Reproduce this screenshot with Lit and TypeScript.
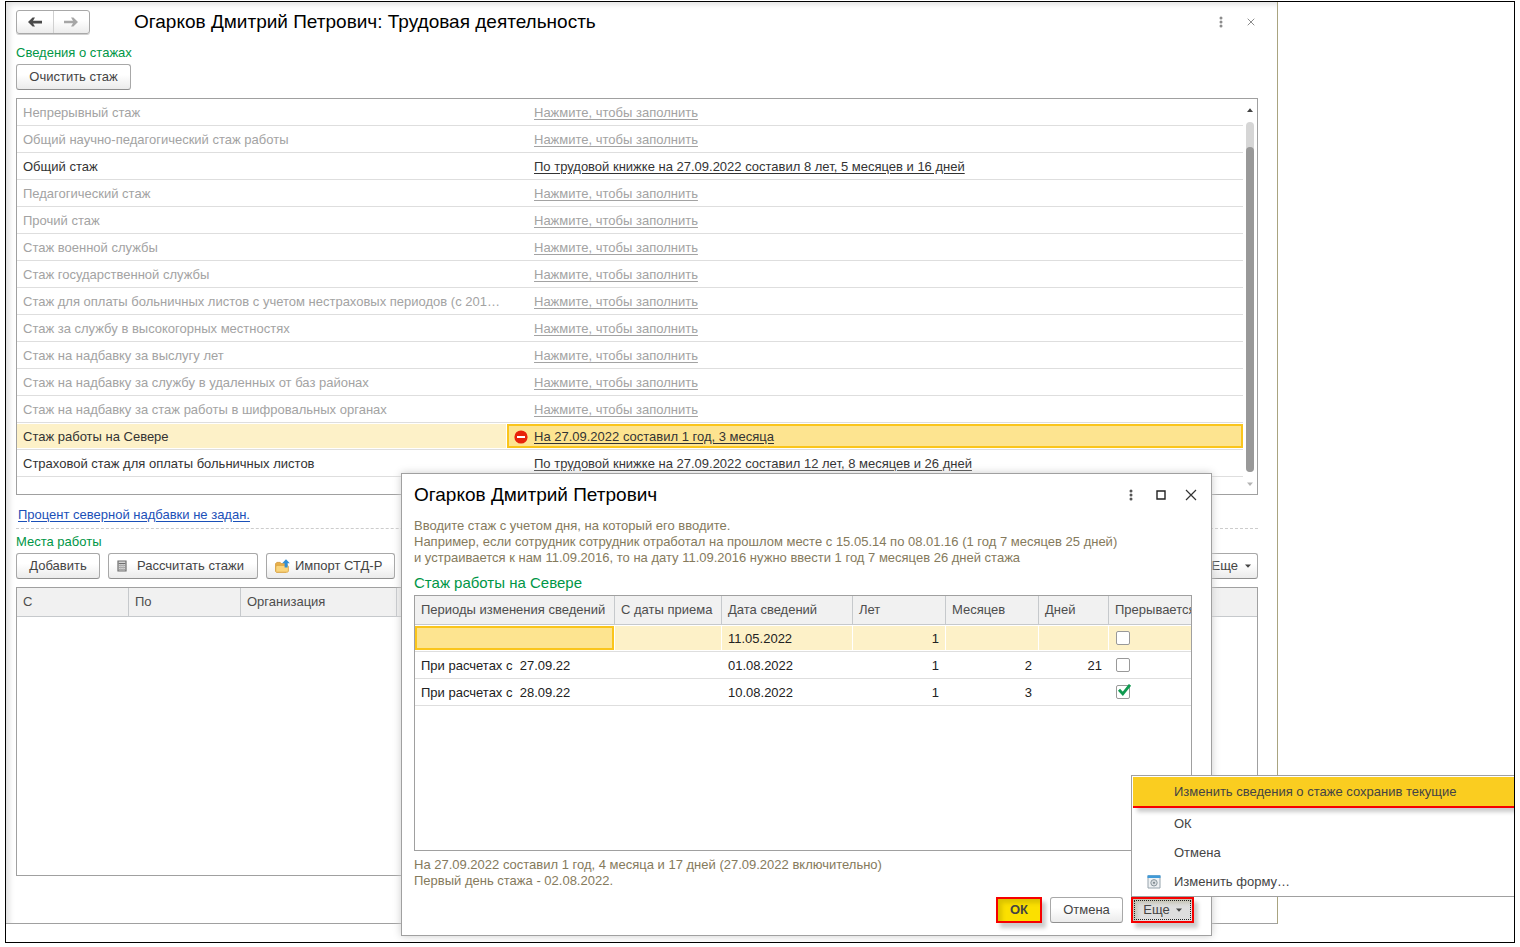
import { LitElement, html, css, svg, nothing } from "lit";
import { customElement, state } from "lit/decorators.js";
import { classMap } from "lit/directives/class-map.js";

interface Experience {
  name: string;
  value?: string;
  selected?: boolean;
}

interface Period {
  period: string;
  hired: string;
  date: string;
  years: string;
  months: string;
  days: string;
  interrupted: boolean;
}

const EXPERIENCES: Experience[] = [
  { name: "Непрерывный стаж" },
  { name: "Общий научно-педагогический стаж работы" },
  { name: "Общий стаж", value: "По трудовой книжке на 27.09.2022 составил 8 лет, 5 месяцев и 16 дней" },
  { name: "Педагогический стаж" },
  { name: "Прочий стаж" },
  { name: "Стаж военной службы" },
  { name: "Стаж государственной службы" },
  { name: "Стаж для оплаты больничных листов с учетом нестраховых периодов (с 201…" },
  { name: "Стаж за службу в высокогорных местностях" },
  { name: "Стаж на надбавку за выслугу лет" },
  { name: "Стаж на надбавку за службу в удаленных от баз районах" },
  { name: "Стаж на надбавку за стаж работы в шифровальных органах" },
  { name: "Стаж работы на Севере", value: "На 27.09.2022 составил 1 год, 3 месяца", selected: true },
  { name: "Страховой стаж для оплаты больничных листов", value: "По трудовой книжке на 27.09.2022 составил 12 лет, 8 месяцев и 26 дней" },
];

const PERIODS: Period[] = [
  { period: "", hired: "", date: "11.05.2022", years: "1", months: "", days: "", interrupted: false },
  { period: "При расчетах с  27.09.22", hired: "", date: "01.08.2022", years: "1", months: "2", days: "21", interrupted: false },
  { period: "При расчетах с  28.09.22", hired: "", date: "10.08.2022", years: "1", months: "3", days: "", interrupted: true },
];

const icon = (w: number, h: number, body: unknown) =>
  html`<svg class="icon" width=${w} height=${h} viewBox="0 0 ${w} ${h}" aria-hidden="true">${body}</svg>`;

const arrowLeft = icon(14, 10, svg`<path d="M0 5 4.6 .4H7L5 3.8H14V6.4H5L7 9.6H4.6Z" fill="#4a4a4a"/>`);
const arrowRight = icon(14, 10, svg`<path d="M14 5 9.4 .4H7L9 3.8H0V6.2H9L7 9.6H9.4Z" fill="#a6a6a6"/>`);
const dots = icon(4, 12, svg`<g fill="currentColor"><circle cx="2" cy="2" r="1.5"/><circle cx="2" cy="6" r="1.5"/><circle cx="2" cy="10" r="1.5"/></g>`);
const closeSmall = icon(8, 8, svg`<path d="M.7 .7 7.3 7.3M7.3 .7 .7 7.3" stroke="#8c8c8c" fill="none"/>`);
const closeBig = icon(12, 12, svg`<path d="M1 1 11 11M11 1 1 11" stroke="#333" stroke-width="1.2" fill="none"/>`);
const maximize = icon(10, 10, svg`<path d="M1 1H9V9H1Z" stroke="#222" stroke-width="1.4" fill="none"/>`);
const caret = icon(6, 4, svg`<path d="M0 .5H6L3 3.7Z" fill="#444"/>`);
const minus = icon(14, 14, svg`<circle cx="7" cy="7" r="6.6" fill="#e8230a"/><path d="M3 6h8v2H3z" fill="#fff"/>`);
const calc = icon(10, 12, svg`
  <path d="M1 1H9V11H1Z" fill="#d4d4d4" stroke="#6e6e6e" stroke-width="1.2"/>
  <path d="M1.6 3.5H8.4" stroke="#6e6e6e"/>
  <path d="M2 5.5H8M2 7.5H8M2 9.5H8" stroke="#9a9a9a" stroke-width=".8"/>
  <path d="M3.8 4V10.4M6.2 4V10.4" stroke="#b4b4b4" stroke-width=".7"/>`);
const folder = icon(15, 14, svg`
  <path d="M.6 12V4.6L1.8 3.4H5.2L6.4 4.6H12V12L11 13.2H1.6Z" fill="#e9b04a" stroke="#cf9434" stroke-width=".8"/>
  <path d="M.8 12.6V7.4L2 6.4H12.6L13.4 7.2V12.2L12.6 13.2H1.2Z" fill="#fad57c" stroke="#d9a344" stroke-width=".8"/>
  <path d="M11 .2 14.8 4.2H12.6V8.4H9.6V4.2H7.2Z" fill="#2f8fd6"/>`);
const formIcon = icon(14, 14, svg`
  <path d="M1 .8H13V13H1Z" fill="#eef1f3" stroke="#96a3ac"/>
  <path d="M.5 .3H13.5V3H.5Z" fill="#3f9ad8"/>
  <circle cx="7" cy="7.8" r="3.2" fill="#d8dde0" stroke="#8b979e"/>
  <circle cx="7" cy="7.8" r="1.1" fill="#7d888f"/>`);
const check = html`<svg class="check" width="16" height="16" viewBox="0 0 16 16" aria-hidden="true">
  <path d="M3 5.8 6.8 9.8 14 .8" fill="none" stroke="#109a50" stroke-width="2.8"/></svg>`;

@customElement("app-root")
export class AppRoot extends LitElement {
  @state() private periods = PERIODS;

  static styles = css`
    :host {
      display: block;
      box-sizing: border-box;
      height: 100vh;
      padding: 1px 5px 4px;
      background: #fff;
      color: #333;
      font: 13px/16px "Liberation Sans", Arial, sans-serif;
    }
    *, *::before, *::after { box-sizing: border-box; }
    .frame {
      position: relative;
      display: grid;
      grid-template-columns: minmax(0, 1fr) 236px;
      height: 100%;
      padding-bottom: 18px;
      border: 1px solid #000;
      overflow: hidden;
    }
    .icon { display: block; flex: none; }
    h1, h2, h3, p { margin: 0; font-weight: normal; }
    button { font: inherit; color: inherit; }

    .window {
      display: flex;
      flex-direction: column;
      min-height: 0;
      padding: 8px 19px 47px 10px;
      border-right: 1px solid #a9a480;
      border-bottom: 1px solid #a0a0a0;
      box-shadow: inset 7px 6px 6px -4px #dedede;
    }
    .bar { display: flex; align-items: center; height: 24px; }
    .nav { display: flex; width: 74px; height: 24px; border: 1px solid #a8a8a8; border-radius: 3px;
      background: linear-gradient(#fff 40%, #ececec); box-shadow: 0 1px 0 #d0d0d0; }
    .nav button { flex: 1; display: grid; place-items: center; padding: 0; border: 0; background: none; }
    .nav button + button { border-left: 1px solid #d0d0d0; }
    .title { flex: 1; color: #000; font-size: 19px; line-height: 24px; }
    .bar .title { margin-left: 44px; }
    .tools { display: flex; align-items: center; color: #8c8c8c; }
    .plain { display: grid; place-items: center; width: 30px; height: 24px; padding: 0; border: 0; background: none; }
    .bar .tools { margin-right: -8px; }
    .section { color: #009646; font-size: 13px; line-height: 16px; }
    .window .section { margin-top: 11px; }
    .btn {
      display: inline-flex;
      align-items: center;
      justify-content: center;
      height: 26px;
      padding: 0 12px;
      border: 1px solid #a8a8a8;
      border-bottom-color: #8f8f8f;
      border-radius: 3px;
      background: linear-gradient(#fff 40%, #ebebeb);
      color: #444;
      white-space: nowrap;
    }
    .row { display: flex; gap: 8px; margin-top: 3px; }
    .row .end { justify-content: flex-end; margin-left: auto; gap: 7px; padding: 0 6px; width: 64px; }
    .w-clear { width: 115px; }
    .w-add { width: 84px; }
    .row .w-calc, .row .w-import { justify-content: flex-start; padding: 0 8px; }
    .w-calc { width: 150px; gap: 10px; }
    .w-import { width: 129px; gap: 5px; }

    table { width: 100%; border-collapse: separate; border-spacing: 0; table-layout: fixed; }
    th, td { padding: 0; text-align: left; font-weight: normal; white-space: pre; }
    td { height: 27px; border-bottom: 1px solid #dedede; }
    .panel { border: 1px solid #a0a0a0; overflow: hidden; }

    .exp { display: flex; flex: none; height: 397px; margin-top: 8px; }
    .exp table { flex: 1; align-self: flex-start; }
    .exp .c-name { width: 490px; }
    .cell { display: flex; align-items: center; height: 24px; margin: 1px 0; padding-top: 2px; padding-left: 6px; }
    .empty, .empty a { color: #a3a3a3; }
    .cell a { color: inherit; text-underline-offset: 2px; }
    .val .cell { padding-left: 27px; }
    .sel .cell { background: #fdf1c8; }
    .exp .sel .cell { margin-right: 1px; }
    .exp .sel .val .cell, .current .cell { margin-right: 0; border: 2px solid #fac51c; background: #fde490; }
    .exp .sel .val .cell { padding-left: 5px; gap: 6px; }
    .scroll { display: flex; flex-direction: column; align-items: center; flex: none; width: 14px; padding: 9px 0 8px; }
    .track { flex: 1; display: flex; align-items: flex-end; width: 8px; margin: 10px 0; border-radius: 4px; background: #d6d6d6; }
    .thumb { width: 8px; height: 325px; border-radius: 4px; background: #999; }

    .link { align-self: flex-start; margin: 12px 0 5px 2px; color: #1b50b8; text-underline-offset: 2px; }
    .rule { border-top: 1px dashed #ccc; }
    .window .places-title { margin-top: 5px; }

    .head th { height: 29px; padding-left: 6px; border-right: 1px solid #c6c9cc; border-bottom: 1px solid #c6c9cc;
      background: #f1f1f1; color: #4d4d4d; overflow: hidden; }
    .head th:last-child { border-right: 0; }
    .places { flex: 1; min-height: 0; margin-top: 8px; }
    .places .w1 { width: 112px; }
    .places .w3 { width: 156px; }

    .dialog {
      position: absolute;
      left: 395px;
      top: 471px;
      display: flex;
      flex-direction: column;
      width: 811px;
      height: 463px;
      padding: 8px 19px 12px 12px;
      border: 1px solid #a0a0a0;
      background: #fff;
      box-shadow: 0 0 8px #ccc;
    }
    .dialog .bar { height: 26px; }
    .dialog .bar .title { margin-left: 0; }
    .dialog .bar .tools { margin-right: -14px; color: #555; }
    .hint { color: #857a5c; }
    .dialog .lead { margin-top: 10px; }
    .dialog h3 { margin-top: 7px; font-size: 15px; line-height: 20px; }
    .periods { height: 257px; margin: 2px 0 6px; }
    .periods .num .cell { justify-content: flex-end; padding-right: 6px; }
    .periods td .cell { color: #222; margin-right: 1px; }
    .periods td:last-child .cell { margin-right: 0; padding-top: 0; }
    .p1 { width: 200px; } .p2 { width: 107px; } .p3 { width: 131px; } .p4 { width: 93px; } .p6 { width: 70px; }
    .tick { display: grid; width: 16px; height: 16px; }
    .tick input { grid-area: 1 / 1; appearance: none; width: 14px; height: 14px; margin: 1px; border: 1px solid #999; border-radius: 2px; background: #fff; }
    .check { grid-area: 1 / 1; z-index: 1; pointer-events: none; margin-left: 1px; }

    .actions { display: flex; justify-content: flex-end; gap: 8px; margin: 8px -2px 0 0; }
    .mark { border: 2px solid #f60000; border-radius: 0; box-shadow: 4px 5px 4px #ccc, inset 4px 4px 4px rgba(90, 80, 0, .2); }
    .ok { width: 46px; background: #fbe000; font-weight: bold; }
    .cancel { width: 73px; }
    .more { position: relative; }
    .more-btn { position: relative; z-index: 1; width: 63px; padding: 0; gap: 6px; background: #dedede; outline: 1px dotted #222; outline-offset: -4px; }
    .menu {
      position: absolute;
      left: 0;
      bottom: 100%;
      width: 400px;
      margin: 0;
      padding: 1px 0 0 1px;
      list-style: none;
      border: 1px solid #a0a0a0;
      background: #fff;
    }
    .menu button { display: grid; grid-template-columns: 14px 1fr; column-gap: 13px; align-items: center; width: 100%; height: 29px;
      padding: 0 14px; border: 0; background: none; text-align: left; color: #444; }
    .menu span { grid-column: 2; }
    .menu .hot { height: 31px; margin-bottom: 1px; border-bottom: 2px solid #f60000; background: #facd20; box-shadow: 4px 4px 4px #ccc; }
  `;

  private toggle(i: number) {
    this.periods = this.periods.map((p, n) => (n === i ? { ...p, interrupted: !p.interrupted } : p));
  }

  private experienceRow(e: Experience) {
    return html`<tr class=${classMap({ sel: !!e.selected, empty: !e.value })}>
      <td><div class="cell">${e.name}</div></td>
      <td class="val"><div class="cell">${e.selected ? minus : nothing}<a href="#">${e.value ?? "Нажмите, чтобы заполнить"}</a></div></td>
    </tr>`;
  }

  private periodRow(p: Period, i: number) {
    return html`<tr class=${classMap({ sel: i === 0 })}>
      <td class=${classMap({ current: i === 0 })}><div class="cell">${p.period}</div></td>
      <td><div class="cell">${p.hired}</div></td>
      <td><div class="cell">${p.date}</div></td>
      <td class="num"><div class="cell">${p.years}</div></td>
      <td class="num"><div class="cell">${p.months}</div></td>
      <td class="num"><div class="cell">${p.days}</div></td>
      <td><div class="cell"><label class="tick"><input type="checkbox" aria-label="Прерывается" .checked=${p.interrupted} @change=${() => this.toggle(i)}>${p.interrupted ? check : nothing}</label></div></td>
    </tr>`;
  }

  private dialog() {
    return html`<section class="dialog" role="dialog" aria-labelledby="dialog-title">
      <header class="bar">
        <h2 class="title" id="dialog-title">Огарков Дмитрий Петрович</h2>
        <div class="tools">
          <button class="plain" aria-label="Меню">${dots}</button>
          <button class="plain" aria-label="Развернуть">${maximize}</button>
          <button class="plain" aria-label="Закрыть">${closeBig}</button>
        </div>
      </header>
      <p class="hint lead">Вводите стаж с учетом дня, на который его вводите.<br>Например, если сотрудник сотрудник отработал на прошлом месте с 15.05.14 по 08.01.16 (1 год 7 месяцев 25 дней)<br>и устраивается к нам 11.09.2016, то на дату 11.09.2016 нужно ввести 1 год 7 месяцев 26 дней стажа</p>
      <h3 class="section">Стаж работы на Севере</h3>
      <div class="panel periods">
        <table>
          <colgroup><col class="p1"><col class="p2"><col class="p3"><col class="p4"><col class="p4"><col class="p6"><col></colgroup>
          <thead class="head"><tr>
            <th>Периоды изменения сведений</th><th>С даты приема</th><th>Дата сведений</th><th>Лет</th><th>Месяцев</th><th>Дней</th><th>Прерывается</th>
          </tr></thead>
          <tbody>${this.periods.map((p, i) => this.periodRow(p, i))}</tbody>
        </table>
      </div>
      <p class="hint">На 27.09.2022 составил 1 год, 4 месяца и 17 дней (27.09.2022 включительно)<br>Первый день стажа - 02.08.2022.</p>
      <footer class="actions">
        <button class="btn mark ok">ОК</button>
        <button class="btn cancel">Отмена</button>
        <div class="more">
          <button class="btn mark more-btn" aria-haspopup="true" aria-expanded="true">Еще ${caret}</button>
          <ul class="menu">
            <li><button class="hot"><span>Изменить сведения о стаже сохранив текущие</span></button></li>
            <li><button><span>ОК</span></button></li>
            <li><button><span>Отмена</span></button></li>
            <li><button>${formIcon}<span>Изменить форму…</span></button></li>
          </ul>
        </div>
      </footer>
    </section>`;
  }

  private body() {
    return html`
      <h2 class="section">Сведения о стажах</h2>
      <div class="row"><button class="btn w-clear">Очистить стаж</button></div>
      <div class="panel exp">
        <table>
          <colgroup><col class="c-name"><col></colgroup>
          <tbody>${EXPERIENCES.map((e) => this.experienceRow(e))}</tbody>
        </table>
        <div class="scroll">
          ${icon(6, 4, svg`<path d="M0 4H6L3 .3Z" fill="#444"/>`)}
          <div class="track"><div class="thumb"></div></div>
          ${icon(6, 4, svg`<path d="M0 .5H6L3 4Z" fill="#b4b4b4"/>`)}
        </div>
      </div>
      <a class="link" href="#">Процент северной надбавки не задан.</a>
      <div class="rule"></div>
      <h2 class="section places-title">Места работы</h2>
      <div class="row">
        <button class="btn w-add">Добавить</button>
        <button class="btn w-calc">${calc}Рассчитать стажи</button>
        <button class="btn w-import">${folder}Импорт СТД-Р</button>
        <button class="btn end">Еще ${caret}</button>
      </div>
      <div class="panel places">
        <table>
          <colgroup><col class="w1"><col class="w1"><col class="w3"><col></colgroup>
          <thead class="head"><tr><th>С</th><th>По</th><th>Организация</th><th></th></tr></thead>
        </table>
      </div>`;
  }

  render() {
    return html`<div class="frame">
      <main class="window">
        <header class="bar">
          <div class="nav"><button aria-label="Назад">${arrowLeft}</button><button aria-label="Вперед">${arrowRight}</button></div>
          <h1 class="title">Огарков Дмитрий Петрович: Трудовая деятельность</h1>
          <div class="tools">
            <button class="plain" aria-label="Меню">${dots}</button>
            <button class="plain" aria-label="Закрыть">${closeSmall}</button>
          </div>
        </header>
        ${this.body()}
      </main>
      ${this.dialog()}
    </div>`;
  }
}
